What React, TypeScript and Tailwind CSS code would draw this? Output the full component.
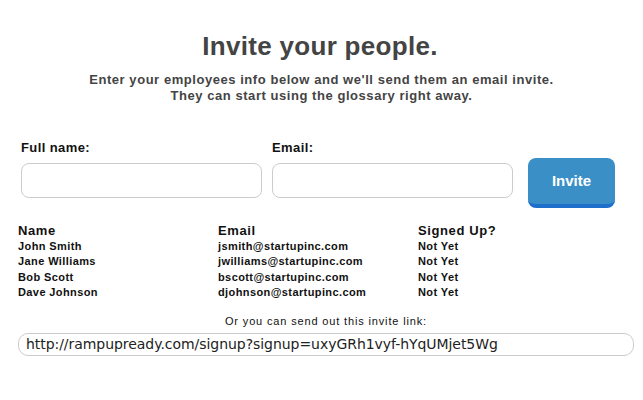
import React from "react";

const people = [
  { name: "John Smith", email: "jsmith@startupinc.com", status: "Not Yet" },
  { name: "Jane Williams", email: "jwilliams@startupinc.com", status: "Not Yet" },
  { name: "Bob Scott", email: "bscott@startupinc.com", status: "Not Yet" },
  { name: "Dave Johnson", email: "djohnson@startupinc.com", status: "Not Yet" },
];

export default function App() {
  return (
    <div
      className="w-[643px] h-[400px] bg-white overflow-hidden"
      style={{ fontFamily: '"Liberation Sans", Arial, sans-serif' }}
    >
      <div className="pt-[31px] flex flex-col items-center">
        <h1 className="text-[26px] leading-[30px] font-bold text-[#444444] tracking-[0.3px] pr-[3px]">
          Invite your people.
        </h1>
        <p className="mt-[11px] text-[13px] leading-[16px] font-bold text-[#444444] text-center tracking-[0.55px]">
          Enter your employees info below and we'll send them an email invite.
          <br />
          They can start using the glossary right away.
        </p>
      </div>

      <div className="mt-[36px] ml-[21px] flex items-start">
        <div className="flex flex-col w-[241px]">
          <label className="text-[13px] leading-[16px] font-bold text-[#111111] tracking-[0.4px]">Full name:</label>
          <input
            type="text"
            className="mt-[7px] h-[35px] w-[241px] rounded-[8px] border border-[#cccccc] bg-white outline-none"
          />
        </div>
        <div className="flex flex-col w-[241px] ml-[10px]">
          <label className="text-[13px] leading-[16px] font-bold text-[#111111] tracking-[0.4px]">Email:</label>
          <input
            type="text"
            className="mt-[7px] h-[35px] w-[241px] rounded-[8px] border border-[#cccccc] bg-white outline-none"
          />
        </div>
        <button className="ml-[15px] mt-[18px] w-[87px] h-[50px] rounded-[8px] bg-[#3a8fc6] border-b-[4px] border-[#1d6fcb] text-white text-[15px] font-bold flex items-center justify-center">
          Invite
        </button>
      </div>

      <div className="mt-[15px] ml-[18px] text-[#111111]">
        <div className="flex text-[13px] leading-[16px] font-bold tracking-[0.6px]">
          <div className="w-[200px]">Name</div>
          <div className="w-[200px]">Email</div>
          <div className="w-[200px]">Signed Up?</div>
        </div>
        {people.map((p) => (
          <div key={p.email} className="flex text-[11px] leading-[15.3px] font-bold tracking-[0.4px]">
            <div className="w-[200px]">{p.name}</div>
            <div className="w-[200px]">{p.email}</div>
            <div className="w-[200px]">{p.status}</div>
          </div>
        ))}
      </div>

      <div className="mt-[14px] ml-[18px] w-[616px] flex flex-col">
        <p className="text-[11px] leading-[15px] text-[#111111] text-center tracking-[0.85px]">
          Or you can send out this invite link:
        </p>
        <div
          className="mt-[4px] h-[23px] w-[616px] rounded-[10px] border border-[#cccccc] flex items-center pl-[7px] text-[14px] text-[#222222] tracking-[-0.05px]"
          style={{ fontFamily: '"DejaVu Sans", sans-serif' }}
        >
          http://rampupready.com/signup?signup=uxyGRh1vyf-hYqUMjet5Wg
        </div>
      </div>
    </div>
  );
}
